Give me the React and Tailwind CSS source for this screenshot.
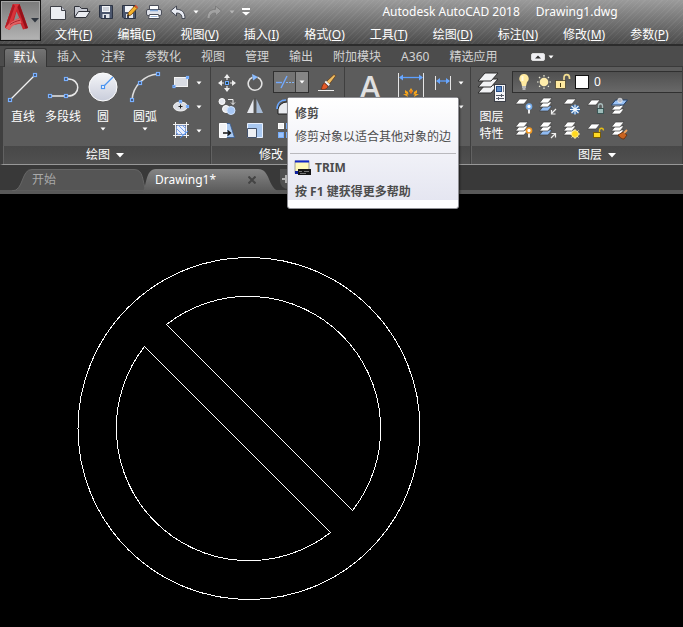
import React from "react";

const FONT = "font-['Noto_Sans','Noto_Sans_CJK_SC',sans-serif]";

function Svg({ w = 20, h = 20, children }) {
  return (
    <svg width={w} height={h} viewBox={`0 0 ${w} ${h}`} fill="none" aria-hidden="true" className="block shrink-0">
      {children}
    </svg>
  );
}

function Caret({ className = "text-white" }) {
  return (
    <svg width="6" height="4" viewBox="0 0 6 4" aria-hidden="true" className={`block ${className}`}>
      <path d="M0.5 0.5h5L3 3.5z" fill="currentColor" />
    </svg>
  );
}

/* Blue grip square, as on the ends of drawn geometry */
function Grip({ x, y, s = 3 }) {
  return <rect x={x - s / 2} y={y - s / 2} width={s} height={s} fill="#3a4a66" stroke="#79b0ff" strokeWidth="1.2" />;
}

/* ---------- quick access icons ---------- */
const NewIcon = () => (
  <Svg>
    <path d="M2.5 4.5h11l4 4v9h-15z" fill="#eceef3" stroke="#3d3f46" />
    <path d="M13.5 4.5v4h4" fill="#c5c8d2" stroke="#3d3f46" />
  </Svg>
);
const OpenIcon = () => (
  <Svg>
    <path d="M2.5 15.5V4.5h5l2 2h6v3" fill="#c9ccd5" stroke="#30323a" />
    <path d="M2.5 15.5l4-6h11.500l-4 6z" fill="#eceef3" stroke="#30323a" />
  </Svg>
);
const SaveIcon = () => (
  <Svg>
    <path d="M3.500 3.500h13v13h-11.500l-1.500-1.500z" fill="#4b566d" stroke="#2b3242" />
    <path d="M6 4h8v6H6z" fill="#f2f4f8" />
    <path d="M7 6h6M7 8h6" stroke="#aab1bf" />
    <path d="M6.500 12h7v4h-7z" fill="#dfe3ea" />
    <path d="M8 13h2v3H8z" fill="#39435a" />
  </Svg>
);
const SaveAsIcon = () => (
  <Svg>
    <path d="M2.500 3.500h13v13h-11.500l-1.500-1.500z" fill="#4b566d" stroke="#2b3242" />
    <path d="M5 4h8v6H5z" fill="#f2f4f8" />
    <path d="M6 12h7v4H6z" fill="#dfe3ea" />
    <path d="M7 13h2v3H7z" fill="#39435a" />
    <path d="M7.500 14l1-3.500 6-6.500 2.500 2.500-6 6.500z" fill="#f5b32c" stroke="#7d4a10" strokeWidth="0.800" />
    <path d="M14.500 4l1.200-1.200 2.500 2.500L17 6.500z" fill="#d8502d" />
    <path d="M7.500 14l.5-2 1.500 1.500z" fill="#222" />
  </Svg>
);
const PrintIcon = () => (
  <Svg>
    <path d="M5.500 7V3.500h9V7" fill="#fff" stroke="#4b4e58" />
    <rect x="2.500" y="7.500" width="15" height="6" rx="1.500" fill="#dfe2ea" stroke="#4b4e58" />
    <path d="M6 8.500h8" stroke="#7fa5d6" strokeWidth="1.500" />
    <path d="M5.500 12.500h9l1 4h-11z" fill="#fff" stroke="#4b4e58" />
    <path d="M6.500 14.500h7" stroke="#9db7dc" />
  </Svg>
);
const UndoIcon = () => (
  <Svg>
    <path d="M2.500 9l6-5v3.300c5 0 8.500 2.700 8.500 9.200h-3c0-4-2-5.500-5.500-5.500V14z" fill="#e8ebf3" stroke="#444853" />
  </Svg>
);
const RedoIcon = () => (
  <Svg>
    <path d="M17.500 9l-6-5v3.300C6.500 7.300 3 10 3 16.500h3c0-4 2-5.500 5.500-5.500V14z" fill="#a2a2a2" stroke="#7c7c7c" />
  </Svg>
);
const CustomizeIcon = () => (
  <Svg w={10} h={8}>
    <path d="M1 1h8" stroke="#fff" strokeWidth="2" />
    <path d="M1 4h8L5 7.500z" fill="#fff" />
  </Svg>
);
const AppLogo = () => (
  <Svg w={26} h={28}>
    <path d="M9 1h6.500L24 25l-5 1.500-2.500-6-9 2L5.500 27 1 24.500z" fill="#c9252d" />
    <path d="M9 1h6l-2 4L5.500 27 1 24.500z" fill="#d8343b" />
    <path d="M9 1L1 24.500l1.800 1L11 3z" fill="#b01a24" />
    <path d="M12.500 8.500l2.800 6.500-5.500 3z" fill="#8c8c8c" />
    <path d="M15.500 1L24 25l-2.500.8L13.500 4z" fill="#951119" />
    <path d="M3 23c3-3.500 7-6.500 13-8l1.500 5c-5 .2-8.500 1.500-12 7L1.500 25z" fill="#e26061" />
    <path d="M6 21.500c3-2 6-3.500 10.300-4.300" stroke="#a52630" />
  </Svg>
);

/* ---------- drawing tool icons ---------- */
const LineIcon = () => (
  <Svg w={32} h={32}>
    <path d="M3 29L28 4" stroke="#f2f2f2" strokeWidth="1.300" />
    <Grip x={3} y={29} /><Grip x={28} y={4} />
  </Svg>
);
const PolylineIcon = () => (
  <Svg w={32} h={32}>
    <path d="M3 25h18c13 0 13-17 0-17h-2" stroke="#e8e8e8" strokeWidth="1.500" />
    <Grip x={3} y={25} /><Grip x={19} y={25} /><Grip x={19} y={8} />
  </Svg>
);
const CircleIcon = () => (
  <Svg w={32} h={32}>
    <defs>
      <linearGradient id="disc" x1="0" y1="0" x2="0" y2="1">
        <stop offset="0" stopColor="#f4f5f8" />
        <stop offset="1" stopColor="#c9cddb" />
      </linearGradient>
    </defs>
    <circle cx="16" cy="16" r="14" fill="url(#disc)" stroke="#fff" strokeWidth="1" />
    <path d="M17 15l9-9" stroke="#4b94f0" strokeWidth="1.200" />
    <rect x="14.500" y="14.500" width="3" height="3" fill="#fff" stroke="#4b94f0" strokeWidth="1.200" />
  </Svg>
);
const ArcIcon = () => (
  <Svg w={32} h={32}>
    <path d="M3 29C4 15 15 4 29 3" stroke="#dedede" strokeWidth="1.500" />
    <Grip x={3} y={29} /><Grip x={11} y={12} /><Grip x={29} y={3} />
  </Svg>
);
const RectIcon = () => (
  <Svg>
    <rect x="3.500" y="4.500" width="13" height="9" fill="#d9dce3" stroke="#f5f5f5" />
    <Grip x={3} y={13.5} s={2} /><Grip x={16.5} y={4.5} s={2} />
  </Svg>
);
const EllipseIcon = () => (
  <Svg>
    <ellipse cx="9.500" cy="9.500" rx="7" ry="4.500" fill="#d9dce3" stroke="#f5f5f5" />
    <path d="M7.500 9.500h4M9.500 7.500v4" stroke="#222" />
    <Grip x={9.5} y={4.5} s={2} /><Grip x={16.5} y={9.5} s={2} />
  </Svg>
);
const HatchIcon = () => (
  <Svg>
    <rect x="5" y="4" width="10" height="10" fill="#e8eefc" stroke="#233d75" />
    <path d="M5 7l7 7M5 11l3 3M7 4l8 8M11 4l4 4" stroke="#73a2f0" />
    <path d="M4.500 1v16M2 3.500h16M15.500 1v16M2 14.500h16" stroke="#f2f2f2" />
    <path d="M9 17l8-7" stroke="#3f8cff" />
  </Svg>
);

/* ---------- modify icons ---------- */
const MoveIcon = () => (
  <Svg>
    <path d="M10 2v16M2 10h16" stroke="#eee" strokeWidth="1.200" />
    <path d="M10 1l3 4H7zM10 19l3-4H7zM1 10l4-3v6zM19 10l-4-3v6z" fill="#eee" />
    <rect x="7" y="7" width="6" height="6" fill="#555" />
    <rect x="8.500" y="8.500" width="3" height="3" fill="#244" stroke="#69a7ff" />
  </Svg>
);
const RotateIcon = () => (
  <Svg>
    <path d="M7.500 4.200A6.800 6.800 0 1 0 12.500 4.200" stroke="#e2e2e2" strokeWidth="1.600" />
    <path d="M7 1l6 3-5 3.500z" fill="#8bbcff" />
  </Svg>
);
const TrimIcon = () => (
  <Svg>
    <path d="M1 10.500h6" stroke="#71a9ff" strokeWidth="1.400" />
    <path d="M6 16l6-12" stroke="#71a9ff" strokeWidth="1.400" />
    <path d="M11 10.500h8" stroke="#83b2ef" strokeDasharray="2 1" />
  </Svg>
);
const EraseIcon = () => (
  <Svg>
    <path d="M1 17.500h16" stroke="#eee" />
    <path d="M9.500 8.500L17 1.500l1.800 1.200L12.500 11z" fill="#f0bd61" stroke="#5b3514" strokeWidth="0.700" />
    <path d="M8.200 8.500l4 3.800" stroke="#f3f3f3" strokeWidth="2.200" />
    <path d="M4 16c1.500-1 .5-4.500 3.500-6l3.500 3.200c-.5 2.500-3.500 4-7 2.800z" fill="#e45a27" stroke="#682710" strokeWidth="0.700" />
  </Svg>
);
const CopyIcon = () => (
  <Svg>
    <circle cx="5" cy="4.500" r="3" fill="#e5e7ed" stroke="#fff" />
    <circle cx="9" cy="12" r="3.500" fill="#e5e7ed" stroke="#fff" />
    <circle cx="14" cy="13.500" r="4" fill="#a7c7f4" stroke="#d1e4ff" />
    <path d="M11 2.500h5v5M14 5.500l2 2 2-2" stroke="#eee" />
  </Svg>
);
const MirrorIcon = () => (
  <Svg>
    <path d="M8.500 2v14H2z" fill="#e7e9ee" />
    <path d="M11.500 2v14H18z" fill="#a5bad5" />
    <path d="M10 1v16" stroke="#4d4d4d" />
  </Svg>
);
const FilletIcon = () => (
  <Svg>
    <path d="M3 17V12a9 9 0 0 1 9-7h7v12z" fill="#e9ebef" stroke="#1d1d1d" />
    <path d="M2 12c0-6 4-9 9-9" stroke="#69a7ff" strokeWidth="1.500" />
  </Svg>
);
const StretchIcon = () => (
  <Svg>
    <path d="M9.500 2.500h3.500l4.500 14h-8z" fill="#a9c8ef" stroke="#335a94" strokeWidth="0.800" />
    <path d="M2.500 2.500h7v14h-7z" fill="#f2f3f6" stroke="#fff" />
    <path d="M6 12h7M10.500 9.500l3 2.500-3 2.500" stroke="#111" strokeWidth="1.300" />
  </Svg>
);
const ScaleIcon = () => (
  <Svg>
    <path d="M2.500 2.500h15v14h-15z" fill="#a9c8f0" stroke="#e7f0ff" />
    <path d="M2.500 7.500h9v9h-9z" fill="#eef0f4" stroke="#44536c" />
  </Svg>
);
const ArrayIcon = () => (
  <Svg>
    <rect x="3.500" y="2.500" width="5" height="5" fill="#f1f1f1" stroke="#fff" />
    <rect x="11.500" y="2.500" width="5" height="5" stroke="#76adfb" />
    <rect x="3.500" y="11.500" width="5" height="5" fill="#9dc3f8" stroke="#76adfb" />
    <rect x="11.500" y="11.500" width="5" height="5" stroke="#76adfb" />
  </Svg>
);

/* ---------- annotation icons ---------- */
const DimensionIcon = () => (
  <Svg w={28} h={30}>
    <path d="M1.500 1v28M26.500 1v28" stroke="#e6e6e6" />
    <path d="M3 5.500h22" stroke="#5da0ff" strokeWidth="1.300" />
    <path d="M2 5.500l4-3v6zM26 5.500l-4-3v6z" fill="#69a7ff" />
    <path d="M14 16l2 3-2 3-2-3zM8 18l3 2 .5 3-3.500-2zM20 18l-3 2-.5 3 3.500-2zM6 22h4l1 3zM22 22h-4l-1 3z" fill="#f6a51b" />
    <path d="M14 18.500v3" stroke="#d7461c" />
  </Svg>
);
const LinearIcon = () => (
  <Svg>
    <path d="M2.500 3v14M17.500 3v14" stroke="#e6e6e6" />
    <path d="M4 8h12" stroke="#5da0ff" strokeWidth="1.300" />
    <path d="M3 8l4-3v6zM17 8l-4-3v6z" fill="#69a7ff" />
  </Svg>
);

/* ---------- layer icons ---------- */
function Sheets({ n = 3, last = "#ffffff", y = 1 }) {
  return [...Array(n).keys()].reverse().map((i) => (
    <path key={i} d={`M1.5 ${y + 5 + i * 4}l4-5h8.500l-4 5z`} fill={i === n - 1 ? last : "#ffffff"} stroke="#3c3c3c" strokeWidth="0.700" />
  ));
}
const Snow = () => (
  <>
    <circle cx="13" cy="12.500" r="4.800" fill="#3d70ad" />
    <path d="M13 7.500v10M8 12.500h10M9.500 9l7 7M16.500 9l-7 7" stroke="#f2f9ff" strokeWidth="1.100" />
  </>
);
function Bulb({ color }) {
  return (
    <>
      <circle cx="15" cy="9.500" r="2.500" fill="#fff" stroke={color} strokeWidth="1.700" />
      <path d="M15 12.500v4" stroke="#eee" strokeWidth="2" />
    </>
  );
}
const LayerOff = () => <Svg><Sheets n={1} y={2} /><Bulb color="#77adeb" /></Svg>;
const LayerIsolate = () => <Svg><Sheets last="#90bbf2" /><path d="M18 12l-4 4M13.500 13v4h4" stroke="#eee" strokeWidth="1.200" /></Svg>;
const LayerFreeze = () => <Svg><Sheets n={1} y={2} /><Snow /></Svg>;
const LayerLock = () => (
  <Svg><Sheets n={1} y={3} /><path d="M12.500 12V9c0-3 4-3 4 0v3" stroke="#aabdbd" strokeWidth="1.300" /><rect x="11.500" y="11.500" width="6" height="5" fill="#9dbcb9" stroke="#3b5554" /></Svg>
);
const LayerCurrent = () => (
  <Svg><Sheets y={4} /><path d="M1.500 8l4-5h12l-4 5z" fill="#9ac2f5" stroke="#223e66" /><circle cx="10" cy="3.500" r="2.300" fill="#b6bbc7" stroke="#fff" strokeWidth="0.600" /></Svg>
);
const LayerOn = () => <Svg><Sheets /><Bulb color="#f29a23" /></Svg>;
const LayerUnisolate = () => <Svg><Sheets last="#90bbf2" /><path d="M13 17l4-4M13.500 12.500h4v4" stroke="#eee" strokeWidth="1.200" /></Svg>;
const LayerThaw = () => (
  <Svg><Sheets /><path d="M13 8v10M8 13h10M9.500 9.500l7 7M16.500 9.500l-7 7" stroke="#fff2a0" /><circle cx="13" cy="13" r="3.500" fill="#ffd91f" stroke="#fff6b0" strokeWidth="0.700" /></Svg>
);
const LayerUnlock = () => (
  <Svg><Sheets n={1} y={3} /><path d="M13.500 12V9.500c0-3 4-3 4 0" stroke="#e5bd14" strokeWidth="1.300" /><rect x="7.500" y="11.500" width="7" height="5" fill="#ffda25" stroke="#7a5d05" /></Svg>
);
const LayerMatch = () => (
  <Svg><Sheets /><path d="M8 14l5-3 4 3-3 4c-2 0-4-1-6-4z" fill="#c86320" stroke="#632b0a" strokeWidth="0.800" /><path d="M14 12l3-3" stroke="#f0a45e" strokeWidth="2" /></Svg>
);
const LayerProps = () => (
  <Svg w={32} h={32}>
    {[2, 1, 0].map((i) => (
      <path key={i} d={`M2 ${10 + i * 6}l7-8h13l-7 8z`} fill="#f2f3f5" stroke="#2c2c2c" />
    ))}
    <rect x="18.500" y="13.500" width="11" height="17" fill="#f4f5f8" stroke="#3b3e46" />
    <rect x="20.500" y="15.500" width="5" height="5" fill="#5d8ac7" stroke="#234b85" />
    <path d="M27.500 15v6" stroke="#777b86" />
    <path d="M20 24.500h8M20 27.500h8M25.500 23v3M22.500 26v3" stroke="#545966" />
  </Svg>
);
const LampIcon = () => (
  <Svg>
    <path d="M10 2a4.500 4.500 0 0 1 3 8l-1 4H8l-1-4a4.500 4.500 0 0 1 3-8z" fill="#ffeaa0" />
    <path d="M8.500 4v5" stroke="#fff9dc" strokeWidth="2" />
    <path d="M8 15h4M8.500 17h3" stroke="#d3d3d3" strokeWidth="1.500" />
  </Svg>
);
const SunIcon = () => (
  <Svg>
    <path d="M10 3v14M3 10h14M5 5l10 10M15 5L5 15" stroke="#eeeeda" strokeWidth="1.200" strokeDasharray="2 1" />
    <circle cx="10" cy="10" r="5.500" fill="#616161" />
    <circle cx="10" cy="10" r="4.300" fill="#ffedaa" />
  </Svg>
);
const UnlockIcon = () => (
  <Svg>
    <path d="M10 9V6c0-4.500 5.500-4.500 5.500 0v1" stroke="#f1dc91" strokeWidth="1.700" />
    <rect x="1.500" y="8.500" width="10" height="8" fill="#ffeaa0" stroke="#4a432e" strokeWidth="0.800" />
    <path d="M6.500 11v4" stroke="#4b3c12" />
  </Svg>
);
const CommandIcon = () => (
  <Svg w={18} h={18}>
    <rect x="1" y="2" width="14" height="12" fill="#fff9b8" stroke="#8b8b8b" strokeWidth="0.800" />
    <path d="M1 2.500h14" stroke="#1227c7" strokeWidth="2" />
    <path d="M1 12h5v3H1z" fill="#0e1f9e" />
    <rect x="4" y="10" width="13" height="6" fill="#171717" />
    <path d="M5 12.500h3M6 14.500h6M10 12.500h5" stroke="#777" />
  </Svg>
);

/* ---------- building blocks ---------- */
function IconButton({ label, icon: Icon, className = "w-6 h-6" }) {
  return (
    <button type="button" aria-label={label} className={`flex shrink-0 items-center justify-center ${className}`}>
      <Icon />
    </button>
  );
}

function MoreButton({ label, className = "w-3 h-6", caret }) {
  return (
    <button type="button" aria-label={label} className={`flex shrink-0 items-center justify-center ${className}`}>
      <Caret className={caret} />
    </button>
  );
}

function BigTool({ label, icon: Icon, more, className = "w-10" }) {
  return (
    <button type="button" className={`flex shrink-0 flex-col items-center whitespace-nowrap ${className}`}>
      <Icon />
      <span className="mt-[6px] leading-4">{label}</span>
      {more && <span className="pt-[2px]"><Caret /></span>}
    </button>
  );
}

function Panel({ title, more = true, titleClass = "justify-center", className = "", children }) {
  return (
    <section className={`flex shrink-0 flex-col border-r border-[#3f3f3f] ${className}`}>
      <div className="flex h-[79px] items-start pt-1">{children}</div>
      <h2 className={`flex h-[18px] items-center gap-[6px] border-l border-[#626262] bg-linear-to-b from-[#484848] to-[#505050] ${titleClass}`}>
        {title}
        {more && <svg width="8" height="5" viewBox="0 0 8 5" aria-hidden="true"><path d="M0 0h8L4 4.500z" fill="#fff" /></svg>}
      </h2>
    </section>
  );
}

const MENUS = [
  ["文件", "F"], ["编辑", "E"], ["视图", "V"], ["插入", "I"], ["格式", "O"],
  ["工具", "T"], ["绘图", "D"], ["标注", "N"], ["修改", "M"], ["参数", "P"],
];
const TABS = ["插入", "注释", "参数化", "视图", "管理", "输出", "附加模块", "A360", "精选应用"];

function Header() {
  return (
    <header className="flex h-[46px] overflow-hidden border-b-2 border-[#2c2c2c] bg-[repeating-linear-gradient(135deg,rgba(255,255,255,0.05)_0px,rgba(255,255,255,0.05)_1px,transparent_1px,transparent_4px),linear-gradient(to_bottom,#9b9b9b,#4b4b4b)]">
      <button type="button" aria-label="应用程序菜单" className="flex h-[41px] w-[41px] shrink-0 items-start gap-px border border-[#151515] bg-linear-to-b from-[#7a7a7a] to-[#b4b4b4] pl-[3px] pt-[2px] shadow-[inset_0_0_0_1px_#a5a5a5]">
        <AppLogo />
        <svg width="8" height="5" viewBox="0 0 8 5" aria-hidden="true" className="mt-[15px]"><path d="M0 0h8L4 4.500z" fill="#30363f" /></svg>
      </button>
      <div className="min-w-0 flex-1">
        <div className="flex h-6 items-center pl-[5px]">
          <IconButton label="新建" icon={NewIcon} />
          <IconButton label="打开" icon={OpenIcon} />
          <IconButton label="保存" icon={SaveIcon} />
          <IconButton label="另存为" icon={SaveAsIcon} />
          <IconButton label="打印" icon={PrintIcon} />
          <IconButton label="放弃" icon={UndoIcon} />
          <MoreButton label="放弃列表" />
          <IconButton label="重做" icon={RedoIcon} />
          <MoreButton label="重做列表" caret="text-[#b5b5b5]" />
          <IconButton label="自定义" icon={CustomizeIcon} className="h-6 w-4" />
          <h1 className="flex flex-1 justify-center gap-4 whitespace-nowrap pl-[63px]">
            <span>Autodesk AutoCAD 2018</span>
            <span>Drawing1.dwg</span>
          </h1>
        </div>
        <nav className="flex h-[22px] items-center gap-[25px] whitespace-nowrap pl-[14px]">
          {MENUS.map(([name, key]) => (
            <button type="button" key={name} className="shrink-0">{name}(<u>{key}</u>)</button>
          ))}
        </nav>
      </div>
    </header>
  );
}

function Tooltip() {
  return (
    <div role="tooltip" className="absolute left-[14px] top-[26px] z-10 w-[172px] whitespace-nowrap rounded-[3px] border border-[#8f8f94] bg-white pb-2 text-[#4c4c4c] shadow-[1px_1px_2px_rgba(0,0,0,0.5)]">
      <div className="bg-linear-to-b from-white to-[#e5e6f1]">
        <p className="px-[7px] pt-[6px] font-bold leading-5">修剪</p>
        <p className="px-[7px] pb-[6px] pt-[3px] leading-5">修剪对象以适合其他对象的边</p>
        <hr className="mx-[2px] border-[#b9b9bd]" />
        <div className="flex items-center gap-[3px] px-[6px] pt-1 font-bold leading-5">
          <CommandIcon />
          TRIM
        </div>
        <p className="px-[7px] pt-[6px] font-bold leading-4">按 F1 键获得更多帮助</p>
      </div>
    </div>
  );
}

function DrawPanel() {
  return (
    <Panel title="绘图" titleClass="pl-[82px]" className="w-[208px]">
      <BigTool label="直线" icon={LineIcon} />
      <BigTool label="多段线" icon={PolylineIcon} />
      <BigTool label="圆" icon={CircleIcon} more />
      <BigTool label="圆弧" icon={ArcIcon} more className="w-11" />
      <div className="pl-[2px]">
        {[["矩形", RectIcon], ["椭圆", EllipseIcon], ["图案填充", HatchIcon]].map(([label, icon]) => (
          <div key={label} className="flex">
            <IconButton label={label} icon={icon} />
            <MoreButton label={`${label}选项`} />
          </div>
        ))}
      </div>
    </Panel>
  );
}

function ModifyPanel() {
  return (
    <Panel title="修改" more={false} titleClass="pl-[47px]" className="w-[134px]">
      <div className="flex flex-col pl-[2px]">
        <div className="flex">
          <IconButton label="移动" icon={MoveIcon} className="h-6 w-7" />
          <IconButton label="旋转" icon={RotateIcon} className="h-6 w-7" />
          <div className="relative ml-1 flex h-6 w-9 items-start">
            <div className="flex h-[22px] w-9 border border-[#303030] bg-[#747474]">
              <IconButton label="修剪" icon={TrimIcon} className="h-5 w-[22px] border-r border-[#3c3c3c]" />
              <MoreButton label="修剪选项" className="h-5 w-3 bg-[#858585]" />
            </div>
            <Tooltip />
          </div>
          <IconButton label="删除" icon={EraseIcon} className="h-6 w-9" />
        </div>
        <div className="flex">
          <IconButton label="复制" icon={CopyIcon} className="h-6 w-7" />
          <IconButton label="镜像" icon={MirrorIcon} className="h-6 w-7" />
          <IconButton label="圆角" icon={FilletIcon} className="h-6 w-8" />
        </div>
        <div className="flex">
          <IconButton label="拉伸" icon={StretchIcon} className="h-6 w-7" />
          <IconButton label="缩放" icon={ScaleIcon} className="h-6 w-7" />
          <IconButton label="阵列" icon={ArrayIcon} className="h-6 w-8" />
        </div>
      </div>
    </Panel>
  );
}

function AnnotatePanel() {
  return (
    <Panel title="" more={false} className="w-[126px]">
      <button type="button" className="w-[50px] text-center font-['Open_Sans',sans-serif] text-[32px] font-semibold leading-8 text-[#e0e0e0]">A</button>
      <IconButton label="标注" icon={DimensionIcon} className="h-8 w-8" />
      <div className="pl-1">
        <div className="flex"><IconButton label="线性" icon={LinearIcon} className="h-6 w-6" /><MoreButton label="线性选项" /></div>
        <div className="flex pl-6"><MoreButton label="引线选项" /></div>
      </div>
    </Panel>
  );
}

const LAYER_ROWS = [
  [["关闭", LayerOff], ["隔离", LayerIsolate], ["冻结", LayerFreeze], ["锁定", LayerLock], ["置为当前", LayerCurrent]],
  [["打开所有图层", LayerOn], ["取消隔离", LayerUnisolate], ["解冻", LayerThaw], ["解锁", LayerUnlock], ["匹配图层", LayerMatch]],
];

function LayerPanel() {
  return (
    <Panel title="图层" titleClass="pl-[106px]" className="min-w-0 flex-1">
      <button type="button" className="flex w-[41px] shrink-0 flex-col items-center">
        <LayerProps />
        <span className="mt-[5px] w-6 leading-[17px]">图层特性</span>
      </button>
      <div className="min-w-0 flex-1">
        <div className="flex h-6 items-start">
          <div className="flex h-[22px] flex-1 items-center border border-r-0 border-[#303030] bg-linear-to-b from-[#505050] to-[#686868] pl-px">
            <LampIcon />
            <SunIcon />
            <UnlockIcon />
            <span className="ml-px size-[14px] shrink-0 border border-[#111] bg-white" />
            <select aria-label="当前图层" className="ml-[5px] min-w-0 flex-1 appearance-none bg-transparent text-white">
              <option>0</option>
            </select>
          </div>
        </div>
        {LAYER_ROWS.map((row) => (
          <div key={row[0][0]} className="flex">
            {row.map(([label, icon]) => <IconButton key={label} label={label} icon={icon} />)}
          </div>
        ))}
      </div>
    </Panel>
  );
}

function FileTabs() {
  return (
    <div className="flex h-[29px] items-start border-b-4 border-[#585858] bg-[#393939] pl-3 pt-1">
      <button type="button" className="relative h-[22px] w-[134px] pl-5 text-left leading-[22px] text-[#a9a9a9]">
        <svg width="134" height="22" viewBox="0 0 134 22" className="absolute inset-0" aria-hidden="true">
          <path d="M0 22C12 22 9 0 20 0.500H122C132 0.500 130 12 134 22z" fill="#555" stroke="#666" />
        </svg>
        <span className="relative">开始</span>
      </button>
      <div className="relative flex h-[22px] w-[134px] items-center justify-between pl-[9px] pr-6">
        <svg width="142" height="24" viewBox="0 0 142 24" className="absolute -left-1 top-0" aria-hidden="true">
          <defs>
            <linearGradient id="activeTab" x1="0" y1="0" x2="0" y2="1">
              <stop offset="0" stopColor="#858585" />
              <stop offset="1" stopColor="#585858" />
            </linearGradient>
          </defs>
          <path d="M0 24C5 18 3 0 14 0H116C130 0 124 22 142 24z" fill="url(#activeTab)" />
        </svg>
        <button type="button" className="relative">Drawing1*</button>
        <button type="button" aria-label="关闭" className="relative">
          <Svg w={8} h={8}><path d="M0.500 0.500l7 7M7.500 0.500l-7 7" stroke="#444" strokeWidth="2" /></Svg>
        </button>
      </div>
      <button type="button" aria-label="新图形" className="flex h-5 w-6 items-center rounded-b-lg bg-[#505050] pl-[2px]">
        <Svg w={8} h={8}><path d="M0 4h8M4 0v8" stroke="#b5b5b5" strokeWidth="2" /></Svg>
      </button>
    </div>
  );
}

export default function App() {
  return (
    <div className={`flex min-h-screen flex-col overflow-hidden bg-black text-xs text-white ${FONT}`}>
      <Header />
      <nav className="flex h-[21px] items-end whitespace-nowrap border-b border-[#3a3a3a] bg-[#4c4c4c] pl-1 text-[#d4d4d4]">
        <button type="button" className="-mb-px h-[19px] w-[43px] rounded-t-[3px] border border-b-0 border-[#343434] bg-linear-to-b from-[#737373] to-[#5d5d5d] leading-4 text-white">默认</button>
        {TABS.map((t) => (
          <button type="button" key={t} className="h-[18px] px-[10px] leading-4">{t}</button>
        ))}
        <button type="button" aria-label="最小化功能区" className="ml-6 flex h-[18px] items-center">
          <Svg w={14} h={8}>
            <rect x="0.500" y="0.500" width="13" height="7" rx="1.500" fill="#f0f0f4" stroke="#ddd" />
            <path d="M4 5.500h6L7 2.500z" fill="#333" />
          </Svg>
        </button>
        <MoreButton label="功能区选项" className="h-[18px] w-3" />
      </nav>
      <main className="flex border-b border-l-[3px] border-b-[#989898] border-l-[#3f3f3f] bg-[#5c5c5c]">
        <DrawPanel />
        <ModifyPanel />
        <AnnotatePanel />
        <LayerPanel />
      </main>
      <FileTabs />
      <div className="flex-1 bg-black">
        <svg width="440" height="430" viewBox="0 194 440 430" fill="none" stroke="#fff" shapeRendering="crispEdges" role="img" aria-label="Drawing1" className="block">
          <circle cx="249" cy="428.500" r="171" />
          <path d="M166.500 324.500L352.500 510.500A132.500 132.500 0 0 0 166.500 324.500z" />
          <path d="M144.500 346.500L330.500 532.500A132.500 132.500 0 0 1 144.500 346.500z" />
        </svg>
      </div>
    </div>
  );
}
